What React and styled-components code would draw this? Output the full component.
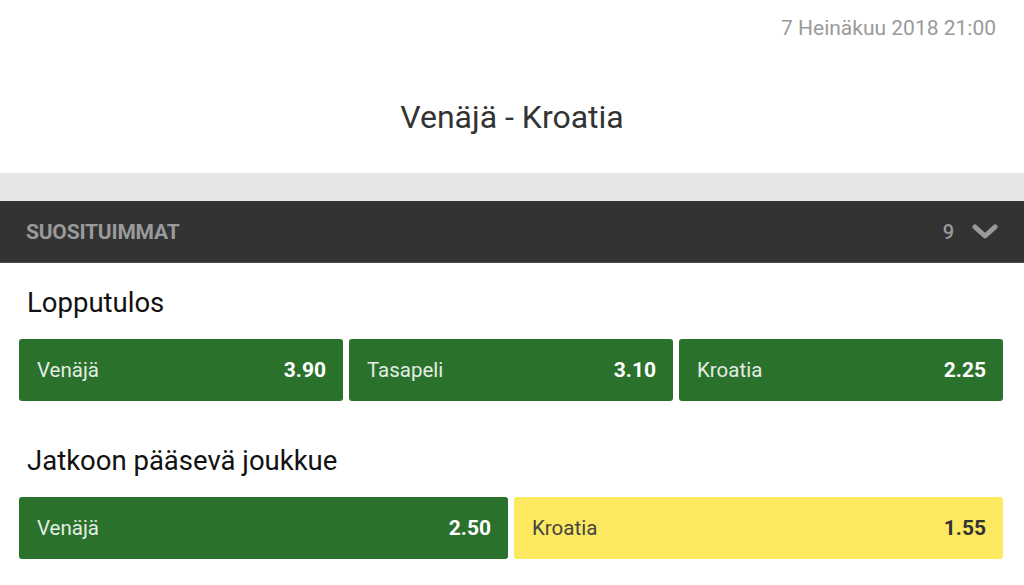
import React from "react";
import styled, { createGlobalStyle } from "styled-components";

const Global = createGlobalStyle`
  html, body { margin: 0; padding: 0; background: #fff; }
  body { font-family: Roboto, "Noto Sans", "Liberation Sans", sans-serif; }
  * { box-sizing: border-box; }
`;

const Page = styled.div`
  width: 1024px;
  height: 585px;
  overflow: hidden;
  background: #fff;
`;

const Top = styled.div`
  height: 173px;
  display: flex;
  flex-direction: column;
  padding: 14px 28px 0 28px;
`;

const DateLine = styled.div`
  text-align: right;
  font-size: 21px;
  line-height: 28px;
  color: #9a9a9a;
`;

const Title = styled.h1`
  margin: 57px 0 0 0;
  text-align: center;
  font-size: 32px;
  line-height: 36px;
  font-weight: 400;
  color: #333;
`;

const Spacer = styled.div`
  height: 28px;
  background: #e6e6e6;
`;

const SectionHeader = styled.div`
  height: 62px;
  background: #333;
  border-bottom: 1px solid #4d4d4d;
  display: flex;
  align-items: center;
  justify-content: space-between;
  padding: 0 26px 0 26px;
  color: #9a9a9a;
`;

const SectionTitle = styled.div`
  font-size: 21px;
  font-weight: 700;
  letter-spacing: -0.2px;
`;

const HeaderRight = styled.div`
  display: flex;
  align-items: center;
  gap: 18px;
  font-size: 20px;
  font-weight: 500;
`;

const Market = styled.div`
  padding: 24px 21px 0 19px;
  & + & { padding-top: 44px; }
`;

const MarketTitle = styled.h2`
  margin: 0 0 21px 8px;
  font-size: 27.5px;
  line-height: 31px;
  font-weight: 400;
  color: #111;
`;

const Row = styled.div`
  display: grid;
  grid-template-columns: repeat(${(p) => p.cols}, 1fr);
  gap: 6px;
`;

const Odd = styled.div`
  height: 62px;
  border-radius: 3px;
  background: ${(p) => (p.selected ? "#fde960" : "#2a722b")};
  display: flex;
  align-items: center;
  justify-content: space-between;
  padding: 0 17px 0 18px;
`;

const Label = styled.span`
  font-size: 20.5px;
  color: ${(p) => (p.selected ? "#444" : "#e4ece4")};
`;

const Price = styled.span`
  font-size: 21px;
  font-weight: 700;
  color: ${(p) => (p.selected ? "#333" : "#fff")};
`;

const Chevron = () => (
  <svg width="26" height="16" viewBox="0 0 26 16">
    <polyline points="3,3 13,12 23,3" fill="none" stroke="#9a9a9a" strokeWidth="5" strokeLinecap="round" strokeLinejoin="round" />
  </svg>
);

const markets = [
  {
    title: "Lopputulos",
    odds: [
      { label: "Venäjä", price: "3.90" },
      { label: "Tasapeli", price: "3.10" },
      { label: "Kroatia", price: "2.25" },
    ],
  },
  {
    title: "Jatkoon pääsevä joukkue",
    odds: [
      { label: "Venäjä", price: "2.50" },
      { label: "Kroatia", price: "1.55", selected: true },
    ],
  },
];

export default function App() {
  return (
    <Page>
      <Global />
      <Top>
        <DateLine>7 Heinäkuu 2018 21:00</DateLine>
        <Title>Venäjä - Kroatia</Title>
      </Top>
      <Spacer />
      <SectionHeader>
        <SectionTitle>SUOSITUIMMAT</SectionTitle>
        <HeaderRight>
          <span>9</span>
          <Chevron />
        </HeaderRight>
      </SectionHeader>
      {markets.map((m) => (
        <Market key={m.title}>
          <MarketTitle>{m.title}</MarketTitle>
          <Row cols={m.odds.length}>
            {m.odds.map((o) => (
              <Odd key={o.label} selected={o.selected}>
                <Label selected={o.selected}>{o.label}</Label>
                <Price selected={o.selected}>{o.price}</Price>
              </Odd>
            ))}
          </Row>
        </Market>
      ))}
    </Page>
  );
}
